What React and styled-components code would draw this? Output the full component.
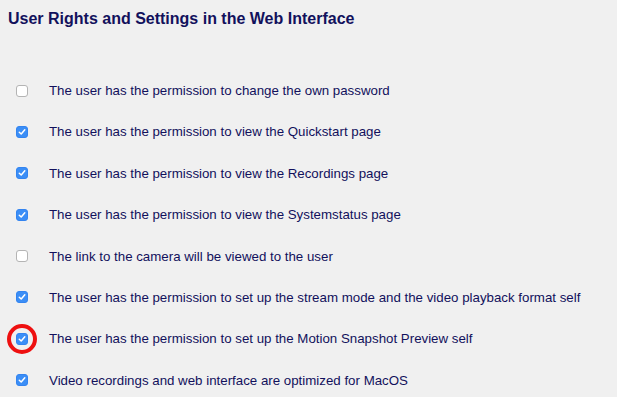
import React from "react";
import styled, { createGlobalStyle } from "styled-components";

const GlobalStyle = createGlobalStyle`
  html, body {
    margin: 0;
    padding: 0;
    background: #f0f0f0;
  }
  body {
    font-family: "Liberation Sans", Arial, sans-serif;
  }
`;

const permissions = [
  { label: "The user has the permission to change the own password", checked: false },
  { label: "The user has the permission to view the Quickstart page", checked: true },
  { label: "The user has the permission to view the Recordings page", checked: true },
  { label: "The user has the permission to view the Systemstatus page", checked: true },
  { label: "The link to the camera will be viewed to the user", checked: false },
  {
    label:
      "The user has the permission to set up the stream mode and the video playback format self",
    checked: true,
  },
  {
    label: "The user has the permission to set up the Motion Snapshot Preview self",
    checked: true,
    highlight: true,
  },
  { label: "Video recordings and web interface are optimized for MacOS", checked: true },
];

const Page = styled.div`
  width: 617px;
  height: 397px;
  overflow: hidden;
  padding: 9px 0 0 8px;
  box-sizing: border-box;
`;

const Title = styled.h2`
  margin: 0;
  font-size: 16px;
  font-weight: bold;
  color: #12115c;
  line-height: 19px;
`;

const List = styled.ul`
  list-style: none;
  margin: 0;
  padding: 55px 0 0 8px;
  display: flex;
  flex-direction: column;
  gap: 26.4px;
`;

const Row = styled.li`
  display: flex;
  align-items: center;
  height: 15px;
  font-size: 13.3px;
  color: #12115c;
`;

const BoxWrap = styled.span`
  position: relative;
  width: 12px;
  height: 12px;
  margin-right: 21px;
  flex-shrink: 0;
`;

const Box = styled.span`
  display: flex;
  align-items: center;
  justify-content: center;
  width: 12px;
  height: 12px;
  box-sizing: border-box;
  border-radius: 3px;
  background: ${(p) => (p.$checked ? "#3b8ef6" : "#ffffff")};
  border: 1px solid ${(p) => (p.$checked ? "#3384f0" : "#b4b4b4")};
`;

const Ring = styled.span`
  position: absolute;
  left: -9px;
  top: -9px;
  width: 30px;
  height: 30px;
  box-sizing: border-box;
  border: 4.5px solid #ee1010;
  border-radius: 50%;
`;

const Check = () => (
  <svg width="8" height="8" viewBox="0 0 8 8" fill="none">
    <path
      d="M1.3 4.2 L3.2 6 L6.8 1.8"
      stroke="#ffffff"
      strokeWidth="1.5"
      strokeLinecap="round"
      strokeLinejoin="round"
    />
  </svg>
);

const App = () => {
  return (
    <Page>
      <GlobalStyle />
      <Title>User Rights and Settings in the Web Interface</Title>
      <List>
        {permissions.map((item) => (
          <Row key={item.label}>
            <BoxWrap>
              <Box $checked={item.checked}>{item.checked && <Check />}</Box>
              {item.highlight && <Ring />}
            </BoxWrap>
            {item.label}
          </Row>
        ))}
      </List>
    </Page>
  );
};

export default App;
